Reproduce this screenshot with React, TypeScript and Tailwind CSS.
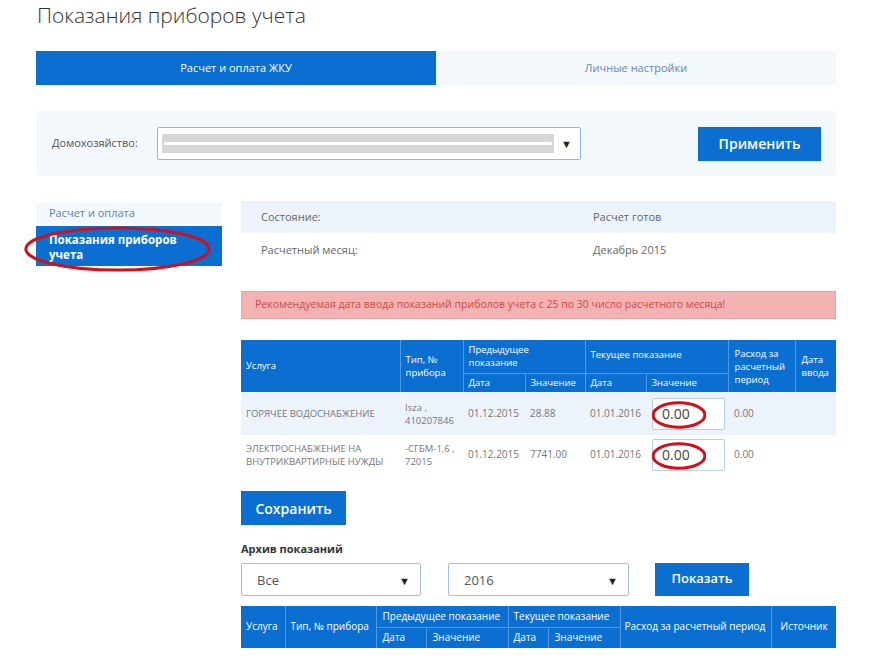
import React from "react";

const blue = "bg-[#0b6fd2]";

function Caret() {
  return <span className="text-[11px] text-[#222] leading-none">▼</span>;
}

function Ellipse({ className }: { className: string }) {
  return (
    <svg className={`absolute pointer-events-none ${className}`} viewBox="0 0 100 50" preserveAspectRatio="none">
      <ellipse cx="50" cy="25" rx="48" ry="22" fill="none" stroke="#d0101a" strokeWidth="3" vectorEffect="non-scaling-stroke" />
    </svg>
  );
}

const readings = [
  { service: "ГОРЯЧЕЕ ВОДОСНАБЖЕНИЕ", device: ["Isza ,", "410207846"], prevDate: "01.12.2015", prevVal: "28.88", curDate: "01.01.2016", usage: "0.00" },
  { service: "ЭЛЕКТРОСНАБЖЕНИЕ НА ВНУТРИКВАРТИРНЫЕ НУЖДЫ", device: ["-СГБМ-1,6 ,", "72015"], prevDate: "01.12.2015", prevVal: "7741.00", curDate: "01.01.2016", usage: "0.00" },
];

export default function App() {
  return (
    <div className="w-[876px] h-[658px] overflow-hidden bg-white font-['Open_Sans',sans-serif] text-[#555]">
      <div className="pl-[36px] w-[836px]">
        <h1 className="pt-[1px] pl-[1px] text-[21px] leading-[29px] font-light text-[#333]">Показания приборов учета</h1>

        {/* tabs */}
        <div className="mt-[21px] flex h-[34px]">
          <div className={`flex-1 ${blue} text-white text-[11px] flex items-center justify-center`}>Расчет и оплата ЖКУ</div>
          <div className="flex-1 bg-[#f3f8fd] text-[#6b86ad] text-[11px] flex items-center justify-center">Личные настройки</div>
        </div>

        {/* household */}
        <div className="mt-[26px] h-[65px] bg-[#f3f8fd] rounded-[3px] flex items-center pl-[16px] pr-[15px]">
          <span className="text-[11px] text-[#555] w-[105px]">Домохозяйство:</span>
          <div className="w-[424px] h-[33px] bg-white border border-[#8fb6de] rounded-[2px] flex items-center pl-[4px] pr-[8px]">
            <div className="w-[392px] h-[19px] bg-[#d6d6d6] flex items-center px-[2px]">
              <div className="w-full h-[3px] bg-white rounded-full" />
            </div>
            <div className="flex-1 flex justify-end"><Caret /></div>
          </div>
          <div className="flex-1" />
          <button className={`w-[123px] h-[34px] ${blue} text-white text-[14px] font-semibold`}>Применить</button>
        </div>

        <div className="mt-[25px] flex gap-[19px]">
          {/* sidebar */}
          <div className="w-[186px] pt-[2px] relative">
            <div className="h-[21px] bg-[#f3f8fd] text-[11px] text-[#5b7fb3] pl-[13px] flex items-center">Расчет и оплата</div>
            <div className={`mt-[2px] h-[40px] ${blue} text-white text-[11.5px] font-bold leading-[15px] pl-[13px] pt-[6px]`}>
              Показания приборов<br />учета
            </div>
            <Ellipse className="left-[-14px] top-[24px] w-[191px] h-[48px]" />
          </div>

          {/* main */}
          <div className="w-[595px]">
            <div className="h-[32px] bg-[#edf3fa] flex items-center text-[11px] text-[#666]">
              <span className="pl-[20px] w-[352px]">Состояние:</span>
              <span>Расчет готов</span>
            </div>
            <div className="h-[35px] flex items-center text-[11px] text-[#666]">
              <span className="pl-[20px] w-[352px]">Расчетный месяц:</span>
              <span>Декабрь 2015</span>
            </div>

            <div className="mt-[23px] h-[28px] bg-[#f3b3b3] border border-[#eaa2a2] flex items-center pl-[13px] text-[10.5px] text-[#d44848]">
              Рекомендуемая дата ввода показаний приболов учета с 25 по 30 число расчетного месяца!
            </div>

            <table className="mt-[21px] w-[595px] border-collapse table-fixed text-[9.5px]">
              <colgroup>
                <col className="w-[159px]" />
                <col className="w-[63px]" />
                <col className="w-[62px]" />
                <col className="w-[60px]" />
                <col className="w-[61px]" />
                <col className="w-[82px]" />
                <col className="w-[67px]" />
                <col className="w-[41px]" />
              </colgroup>
              <thead className={`${blue} text-white`}>
                <tr className="h-[33px]">
                  <th rowSpan={2} className="font-normal text-left pl-[5px] border-r border-[#4f98e2]">Услуга</th>
                  <th rowSpan={2} className="font-normal text-left pl-[5px] leading-[13px] border-r border-[#4f98e2]">Тип, №<br />прибора</th>
                  <th colSpan={2} className="font-normal text-left pl-[5px] leading-[13px] align-top pt-[3px] border-r border-b border-[#4f98e2]">Предыдущее<br />показание</th>
                  <th colSpan={2} className="font-normal text-left pl-[5px] align-top pt-[8px] border-r border-b border-[#4f98e2]">Текущее показание</th>
                  <th rowSpan={2} className="font-normal text-left pl-[6px] leading-[13px] border-r border-[#4f98e2]">Расход за<br />расчетный<br />период</th>
                  <th rowSpan={2} className="font-normal text-left pl-[6px] leading-[13px]">Дата<br />ввода</th>
                </tr>
                <tr className="h-[19px]">
                  <th className="font-normal text-left pl-[5px] border-r border-[#4f98e2]">Дата</th>
                  <th className="font-normal text-left pl-[5px] border-r border-[#4f98e2]">Значение</th>
                  <th className="font-normal text-left pl-[5px] border-r border-[#4f98e2]">Дата</th>
                  <th className="font-normal text-left pl-[5px] border-r border-[#4f98e2]">Значение</th>
                </tr>
              </thead>
              <tbody className="text-[#777] text-[10px]">
                {readings.map((r, i) => (
                  <tr key={i} className={i === 0 ? "h-[43px] bg-[#edf3fa]" : "h-[39px]"}>
                    <td className="pl-[5px] pr-[4px] leading-[13px] text-[9.5px]">{r.service}</td>
                    <td className="pl-[5px] leading-[13px] text-[9.5px]">{r.device[0]}<br />{r.device[1]}</td>
                    <td className="pl-[5px]">{r.prevDate}</td>
                    <td className="pl-[5px]">{r.prevVal}</td>
                    <td className="pl-[5px]">{r.curDate}</td>
                    <td className="pl-[6px]">
                      <div className="relative w-[73px] h-[32px] bg-white border border-[#b5cde6] rounded-[2px] flex items-center pl-[9px] text-[14px] text-[#444]">
                        0.00
                        <Ellipse className="left-[-1px] top-[2px] w-[54px] h-[28px]" />
                      </div>
                    </td>
                    <td className="pl-[6px]">{r.usage}</td>
                    <td />
                  </tr>
                ))}
              </tbody>
            </table>

            <button className={`mt-[17px] w-[105px] h-[34px] ${blue} text-white text-[14px] font-semibold`}>Сохранить</button>

            <div className="mt-[16px] text-[11px] font-bold text-[#333]">Архив показаний</div>
            <div className="mt-[5px] flex items-center">
              <div className="w-[180px] h-[33px] border border-[#9fc0e2] rounded-[2px] flex items-center justify-between pl-[15px] pr-[10px] pt-[3px] text-[13px] text-[#555]">
                <span>Все</span><Caret />
              </div>
              <div className="ml-[27px] w-[181px] h-[33px] border border-[#9fc0e2] rounded-[2px] flex items-center justify-between pl-[15px] pr-[10px] pt-[3px] text-[13px] text-[#555]">
                <span>2016</span><Caret />
              </div>
              <button className={`ml-[26px] w-[94px] h-[33px] ${blue} text-white text-[13px] font-semibold`}>Показать</button>
            </div>

            <table className="mt-[10px] w-[595px] border-collapse table-fixed text-[10px] text-white">
              <colgroup>
                <col className="w-[44px]" />
                <col className="w-[91px]" />
                <col className="w-[50px]" />
                <col className="w-[82px]" />
                <col className="w-[40px]" />
                <col className="w-[72px]" />
                <col className="w-[151px]" />
                <col className="w-[65px]" />
              </colgroup>
              <thead className={blue}>
                <tr className="h-[22px]">
                  <th rowSpan={2} className="font-normal text-left pl-[5px] border-r border-[#4f98e2]">Услуга</th>
                  <th rowSpan={2} className="font-normal text-left pl-[5px] border-r border-[#4f98e2]">Тип, № прибора</th>
                  <th colSpan={2} className="font-normal text-left pl-[6px] border-r border-b border-[#4f98e2]">Предыдущее показание</th>
                  <th colSpan={2} className="font-normal text-left pl-[5px] border-r border-b border-[#4f98e2]">Текущее показание</th>
                  <th rowSpan={2} className="font-normal text-left pl-[4px] border-r border-[#4f98e2]">Расход за расчетный период</th>
                  <th rowSpan={2} className="font-normal text-left pl-[9px]">Источник</th>
                </tr>
                <tr className="h-[20px]">
                  <th className="font-normal text-left pl-[6px] border-r border-[#4f98e2]">Дата</th>
                  <th className="font-normal text-left pl-[6px] border-r border-[#4f98e2]">Значение</th>
                  <th className="font-normal text-left pl-[5px] border-r border-[#4f98e2]">Дата</th>
                  <th className="font-normal text-left pl-[6px] border-r border-[#4f98e2]">Значение</th>
                </tr>
              </thead>
            </table>
          </div>
        </div>
      </div>
    </div>
  );
}
